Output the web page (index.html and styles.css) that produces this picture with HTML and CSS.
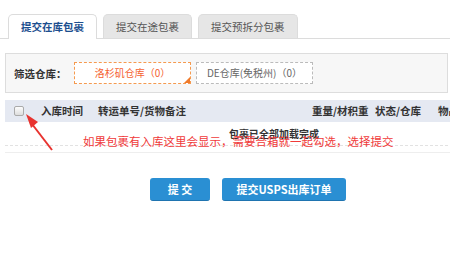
FILE: index.html
```html
<!DOCTYPE html>
<html lang="zh-CN">
<head>
  <meta charset="UTF-8">
  <title>提交在库包裹</title>
  <link rel="stylesheet" href="styles.css">
</head>
<body>

  <div class="page">
    <div class="tabs">
      <div class="tab active">提交在库包裹</div>
      <div class="tab">提交在途包裹</div>
      <div class="tab">提交预拆分包裹</div>
    </div>

    <div class="filter">
      <span class="filter-label">筛选仓库：</span>
      <div class="store selected">洛杉矶仓库（0）</div>
      <div class="store">DE仓库(免税州)（0）</div>
    </div>

    <div class="table">
      <div class="row head">
        <div class="cell"><span class="check"></span></div>
        <div class="cell">入库时间</div>
        <div class="cell">转运单号/货物备注</div>
        <div class="cell">重量/材积重</div>
        <div class="cell">状态/仓库</div>
        <div class="cell">物品</div>
      </div>
      <div class="done">包裹已全部加载完成</div>
    </div>

    <div class="actions">
      <button class="btn">提 交</button>
      <button class="btn wide">提交USPS出库订单</button>
    </div>

    <div class="note">如果包裹有入库这里会显示，需要合箱就一起勾选，选择提交</div>
    <svg class="arrow" width="60" height="70" viewBox="0 0 60 70">
      <line x1="50" y1="66" x2="30" y2="40" stroke="#e8332f" stroke-width="2"/>
      <polygon points="24,30 36,38 29,44" fill="#e8332f"/>
    </svg>
  </div>

</body>
</html>
```

FILE: styles.css
```css
body {
  margin: 0;
  background: #fff;
  font-family: "Noto Sans CJK SC", "Liberation Sans", sans-serif;
  font-size: 11px;
  color: #333;
  overflow: hidden;
}
.page {
  position: relative;
  width: 450px;
  height: 265px;
  overflow: hidden;
}
.tabs {
  display: flex;
  gap: 6px;
  padding: 14px 0 0 8px;
  border-bottom: 1px solid #dcdcdc;
}
.tab {
  height: 23px;
  line-height: 23px;
  padding: 0 12px;
  font-size: 10.5px;
  color: #555;
  background: #e6e6e6;
  border: 1px solid #dcdcdc;
  border-bottom: none;
  border-radius: 5px 5px 0 0;
}
.tab.active {
  background: #fff;
  color: #1d4f8f;
  font-weight: bold;
  margin-bottom: -1px;
  height: 24px;
}
.filter {
  display: flex;
  align-items: center;
  gap: 5px;
  height: 38px;
  margin: 14px 2px 0 5px;
  padding-left: 8px;
  background: #f7f7f7;
  border: 1px solid #dddddd;
}
.filter-label {
  width: 55px;
  font-weight: bold;
  font-size: 10.5px;
  color: #333;
}
.store {
  position: relative;
  width: 115px;
  height: 20px;
  line-height: 20px;
  text-align: center;
  font-size: 10px;
  color: #666;
  background: #fff;
  border: 1px dashed #bbb;
}
.store.selected {
  color: #f5622f;
  border: 1px dashed #f59a4f;
}
.store.selected::after {
  content: "";
  position: absolute;
  right: 0;
  bottom: 0;
  border-left: 6px solid transparent;
  border-bottom: 6px solid #f07a2a;
}
.table {
  width: 538px;
  margin: 7px 0 0 5px;
  border-bottom: 1px solid #eee;
  padding-bottom: 6px;
}
.row {
  display: grid;
  grid-template-columns: 31px 57px 214px 63px 63px 110px;
}
.head {
  height: 22px;
  line-height: 22px;
  background: #e5e9f2;
  font-weight: bold;
  font-size: 10.5px;
}
.cell {
  padding-left: 5px;
}
.check {
  display: inline-block;
  width: 8px;
  height: 8px;
  margin-left: 4px;
  vertical-align: -1px;
  border: 1px solid #aaa;
  border-radius: 2px;
  background: linear-gradient(#fdfdfd, #ddd);
}
.done {
  height: 23px;
  line-height: 23px;
  text-align: center;
  font-weight: bold;
  font-size: 10px;
  border-bottom: 1px dashed #e2e2e2;
}
.actions {
  display: flex;
  gap: 12px;
  margin-top: 25px;
  padding-left: 150px;
}
.btn {
  height: 23px;
  padding: 0;
  width: 60px;
  font-family: inherit;
  font-size: 11px;
  font-weight: bold;
  color: #fff;
  background: #2a8fd3;
  border: none;
  border-bottom: 1px solid #1f74b0;
  border-radius: 3px;
  cursor: pointer;
}
.btn.wide {
  width: 124px;
}
.note {
  position: absolute;
  left: 83px;
  top: 133px;
  font-size: 11.5px;
  color: #f03a3a;
  white-space: nowrap;
}
.arrow {
  position: absolute;
  left: 2px;
  top: 84px;
}
```
